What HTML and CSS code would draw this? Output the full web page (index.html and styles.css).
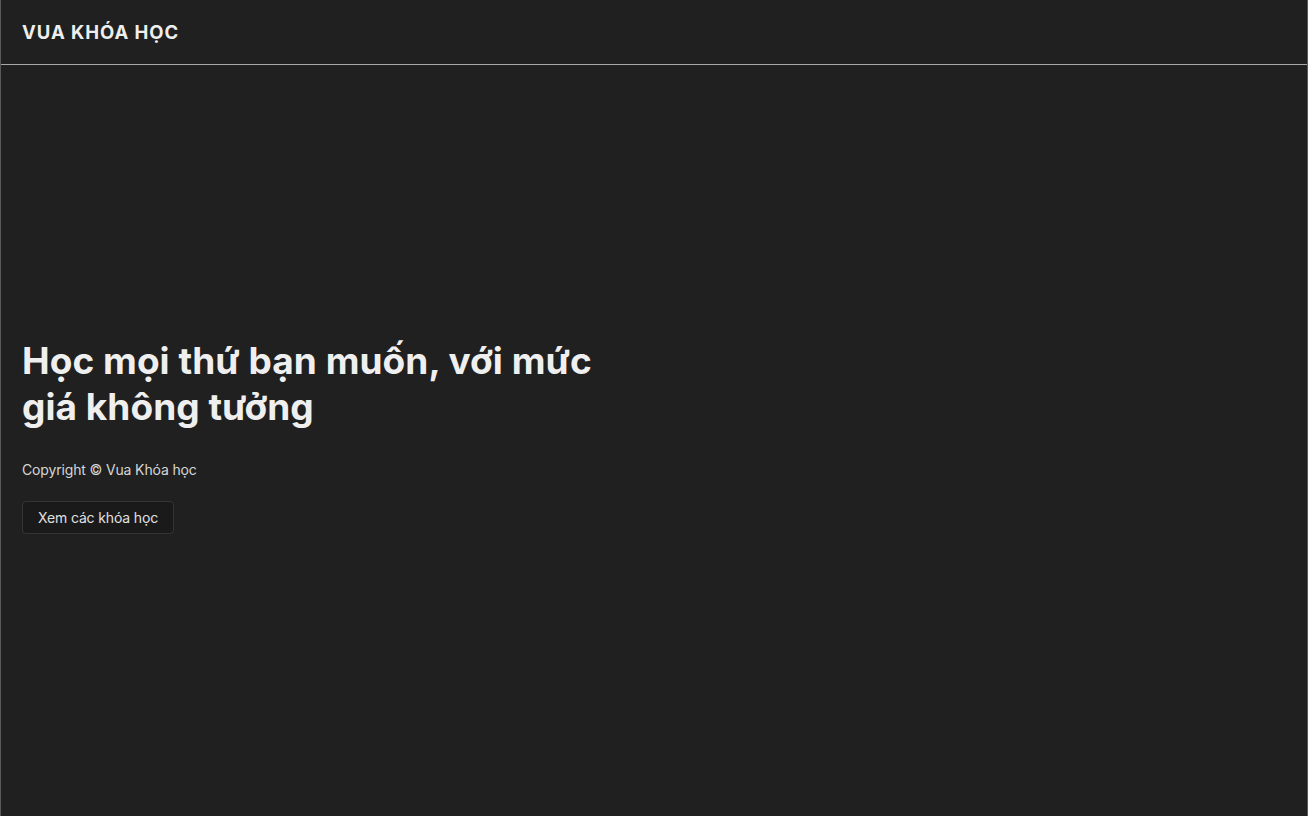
FILE: index.html
```html
<!DOCTYPE html>
<html lang="vi">
<head>
<meta charset="utf-8">
<title>Vua Khóa Học</title>
<link rel="stylesheet" href="styles.css">
</head>
<body>
<div class="page">
  <header class="topbar">
    <div class="brand">VUA KHÓA HỌC</div>
  </header>
  <main class="hero">
    <div class="hero-inner">
      <h1 class="title">Học mọi thứ bạn muốn, với mức giá không tưởng</h1>
      <p class="copy">Copyright © Vua Khóa học</p>
      <button class="btn" type="button">Xem các khóa học</button>
    </div>
  </main>
</div>
</body>
</html>
```

FILE: styles.css
```css
* { box-sizing: border-box; }
html, body { margin: 0; padding: 0; height: 100%; }
body {
  background: #202020;
  color: #e8e8e8;
  font-family: Inter, "Noto Sans", sans-serif;
}
.page {
  height: 816px;
  display: flex;
  flex-direction: column;
  border-left: 1px solid #5a5a5a;
  border-right: 1px solid #5a5a5a;
}
.topbar {
  height: 65px;
  flex: none;
  display: flex;
  align-items: center;
  padding-left: 21px;
  border-bottom: 1px solid #a8a8a8;
}
.brand {
  font-size: 18.5px;
  font-weight: 700;
  color: #eeeeee;
  letter-spacing: 0.95px;
  padding-bottom: 1px;
}
.hero {
  flex: 1;
  display: flex;
  align-items: center;
  padding-left: 21px;
  padding-bottom: 9px;
}
.hero-inner {
  max-width: 600px;
}
.title {
  margin: 0;
  font-size: 37px;
  line-height: 46px;
  font-weight: 700;
  color: #efefef;
  letter-spacing: 0.05px;
}
.copy {
  margin: 31px 0 0;
  font-size: 14px;
  line-height: 18px;
  color: #d6d6d6;
  letter-spacing: -0.15px;
}
.btn {
  display: block;
  margin-top: 22px;
  height: 33px;
  padding: 0 15px;
  font-family: inherit;
  font-size: 14px;
  letter-spacing: -0.15px;
  color: #e0e0e0;
  background: #1a1a1a;
  border: 1px solid #353535;
  border-radius: 4px;
}
```
